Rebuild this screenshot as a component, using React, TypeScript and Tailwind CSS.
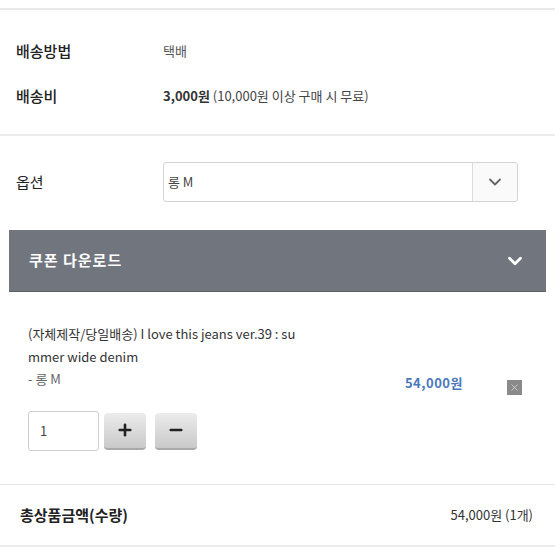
import { ChevronDown, Plus, Minus, X } from "lucide-react";

const font = { fontFamily: '"Noto Sans CJK KR", "Noto Sans", sans-serif' };

export default function App() {
  return (
    <div className="w-[555px] h-[555px] bg-white text-[#222] overflow-hidden" style={font}>
      <div className="mt-[8px] border-t-2 border-[#e9e9e9]" />

      <div className="pt-[26px]">
        <div className="flex items-center h-[30px] pl-[16px]">
          <div className="w-[147px] text-[15px] font-medium">배송방법</div>
          <div className="text-[13px] text-[#555]">택배</div>
        </div>
        <div className="flex items-center h-[30px] mt-[15px] pl-[16px]">
          <div className="w-[147px] text-[15px] font-medium">배송비</div>
          <div className="text-[13px] text-[#444]">
            <span className="font-bold text-[#333]">3,000원</span> (10,000원 이상 구매 시 무료)
          </div>
        </div>
      </div>

      <div className="mt-[23px] border-t-2 border-[#ececec]" />

      <div className="flex items-center pl-[16px] mt-[26px]">
        <div className="w-[147px] text-[15px]">옵션</div>
        <div className="flex w-[355px] h-[40px] border border-[#d4d4d4] rounded-[3px] bg-white">
          <div className="flex-1 flex items-center pl-[4px] text-[13px] text-[#444]">롱 M</div>
          <div className="w-[45px] flex items-center justify-center border-l border-[#dcdcdc] bg-[#fafafa] rounded-r-[3px]">
            <ChevronDown size={20} strokeWidth={2.2} className="text-[#666]" />
          </div>
        </div>
      </div>

      <div className="mx-[9px] mt-[28px] h-[62px] bg-[#71767e] flex items-center justify-between pl-[20px] pr-[20px] border-b border-[#5d6168]">
        <div className="text-white text-[15px] font-bold tracking-[1px]">쿠폰 다운로드</div>
        <ChevronDown size={22} strokeWidth={3} className="text-white" />
      </div>

      <div className="px-[28px] pt-[30px]">
        <div className="text-[13px] leading-[23px] text-[#333] w-[300px] break-all">
          (자체제작/당일배송) I love this jeans ver.39 : su
          <br />
          mmer wide denim
        </div>
        <div className="flex items-start justify-between">
          <div className="text-[13px] leading-[22px] text-[#666]">- 롱 M</div>
          <div className="flex items-center mt-[2px] mr-[5px]">
            <div className="text-[13px] font-bold text-[#4a78bd] tracking-[0.5px]">54,000원</div>
            <div className="ml-[44px] mt-[10px] w-[15px] h-[15px] bg-[#8a8a8a] flex items-center justify-center">
              <X size={11} strokeWidth={1.5} className="text-[#e4e4e4]" />
            </div>
          </div>
        </div>
        <div className="flex items-center gap-[5px] mt-[16px]">
          <div className="w-[71px] h-[40px] border border-[#cfcfcf] rounded-[3px] flex items-center pl-[11px] text-[13px] text-[#444]">
            1
          </div>
          <div className="w-[42px] h-[37px] rounded-[4px] bg-gradient-to-b from-[#ececec] to-[#c9c9c9] border-b-2 border-[#a9a9a9] flex items-center justify-center">
            <Plus size={18} strokeWidth={3.5} className="text-[#222]" />
          </div>
          <div className="ml-[4px] w-[42px] h-[37px] rounded-[4px] bg-gradient-to-b from-[#ececec] to-[#c9c9c9] border-b-2 border-[#a9a9a9] flex items-center justify-center">
            <Minus size={18} strokeWidth={3.5} className="text-[#222]" />
          </div>
        </div>
      </div>

      <div className="mt-[33px] border-t border-[#e6e6e6] border-b-2 border-b-[#ececec] h-[63px] flex items-center justify-between pl-[20px] pr-[22px]">
        <div className="text-[15px] font-bold text-[#222]">총상품금액(수량)</div>
        <div className="text-[13px] text-[#333]">54,000원 (1개)</div>
      </div>
    </div>
  );
}
